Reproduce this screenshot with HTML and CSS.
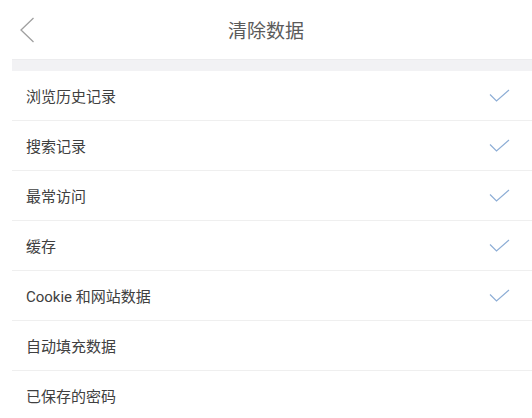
FILE: index.html
```html
<!DOCTYPE html>
<html>
<head>
    <title>清除数据</title>
    <link rel="stylesheet" href="styles.css">
</head>
<body>
    <div class="header">
        <svg class="back" width="16" height="26" viewBox="0 0 16 26">
            <polyline points="14.5,1 2,13 14.5,25" fill="none" stroke="#a0a0a0" stroke-width="1.3"/>
        </svg>
        <h2>清除数据</h2>
    </div>

    <div class="band"></div>

    <!-- list of data types -->
    <ul class="list">
        <li><span>浏览历史记录</span><svg class="check" width="21" height="14" viewBox="0 0 21 14"><polyline points="1,5.5 7.5,12 20,1" fill="none" stroke="#8eaed6" stroke-width="1.2"/></svg></li>
        <li><span>搜索记录</span><svg class="check" width="21" height="14" viewBox="0 0 21 14"><polyline points="1,5.5 7.5,12 20,1" fill="none" stroke="#8eaed6" stroke-width="1.2"/></svg></li>
        <li><span>最常访问</span><svg class="check" width="21" height="14" viewBox="0 0 21 14"><polyline points="1,5.5 7.5,12 20,1" fill="none" stroke="#8eaed6" stroke-width="1.2"/></svg></li>
        <li><span>缓存</span><svg class="check" width="21" height="14" viewBox="0 0 21 14"><polyline points="1,5.5 7.5,12 20,1" fill="none" stroke="#8eaed6" stroke-width="1.2"/></svg></li>
        <li><span>Cookie 和网站数据</span><svg class="check" width="21" height="14" viewBox="0 0 21 14"><polyline points="1,5.5 7.5,12 20,1" fill="none" stroke="#8eaed6" stroke-width="1.2"/></svg></li>
        <li><span>自动填充数据</span></li>
        <li><span>已保存的密码</span></li>
    </ul>
</body>
</html>
```

FILE: styles.css
```css
html, body {
    margin: 0;
    padding: 0;
    background: #fff;
}

body {
    font-family: Roboto, "Noto Sans CJK SC", sans-serif;
    color: #333;
    overflow: hidden;
}

.header {
    height: 59px;
    display: flex;
    align-items: center;
    justify-content: center;
    position: relative;
}

.header h2 {
    margin: 0;
    font-size: 19px;
    font-weight: normal;
    color: #5a5a5a;
}

.back {
    position: absolute;
    left: 19px;
    top: 17px;
}

.band {
    height: 12px;
    margin-left: 12px;
    background: #f2f2f4;
    border-top: 1px solid #ececee;
    box-sizing: border-box;
}

.list {
    list-style: none;
    margin: 0 0 0 12px;
    padding: 0;
}

.list li {
    height: 49px;
    border-bottom: 1px solid #efefef;
    display: flex;
    align-items: center;
    justify-content: space-between;
    padding: 0 22px 0 14px;
    font-size: 15px;
    color: #404040;
}

.check {
    display: block;
}
```
